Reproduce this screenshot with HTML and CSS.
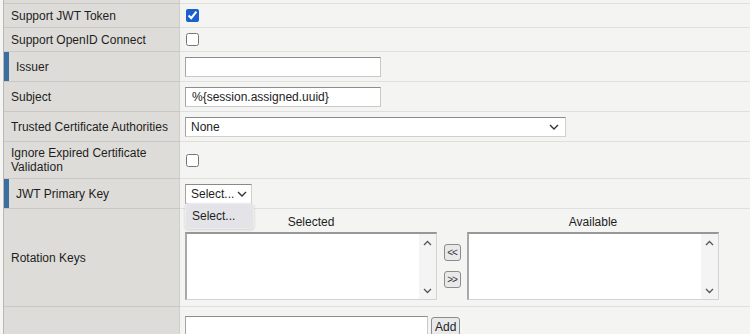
FILE: index.html
```html
<!DOCTYPE html>
<html lang="en">
<head>
    <meta charset="UTF-8">
    <title>JWT Settings</title>
    <link rel="stylesheet" href="styles.css">
</head>
<body>
    <div class="form">
        <div class="row row-top"><div class="label"></div><div class="field"></div></div>

        <div class="row row-short">
            <div class="label">Support JWT Token</div>
            <div class="field"><input type="checkbox" checked></div>
        </div>
        <div class="row row-short">
            <div class="label">Support OpenID Connect</div>
            <div class="field"><input type="checkbox"></div>
        </div>
        <div class="row">
            <div class="label required">Issuer</div>
            <div class="field"><input class="text" type="text"></div>
        </div>
        <div class="row">
            <div class="label">Subject</div>
            <div class="field"><input class="text" type="text" value="%{session.assigned.uuid}"></div>
        </div>
        <div class="row">
            <div class="label">Trusted Certificate Authorities</div>
            <div class="field">
                <div class="select select-wide">
                    <span>None</span>
                    <svg width="10" height="6" viewBox="0 0 10 6"><path d="M1 1 L5 5 L9 1" fill="none" stroke="#333" stroke-width="1.4"/></svg>
                </div>
            </div>
        </div>
        <div class="row row-tall">
            <div class="label">Ignore Expired Certificate Validation</div>
            <div class="field"><input type="checkbox"></div>
        </div>
        <div class="row">
            <div class="label required">JWT Primary Key</div>
            <div class="field">
                <div class="select select-small">
                    <span>Select...</span>
                    <svg width="10" height="6" viewBox="0 0 10 6"><path d="M1 1 L5 5 L9 1" fill="none" stroke="#333" stroke-width="1.4"/></svg>
                    <div class="popup">Select...</div>
                </div>
            </div>
        </div>
        <div class="row row-lists">
            <div class="label">Rotation Keys</div>
            <div class="field">
                <div class="swap">
                    <div class="list-col">
                        <div class="list-title">Selected</div>
                        <div class="listbox">
                            <div class="list-body"></div>
                            <div class="scroll">
                                <svg width="9" height="6" viewBox="0 0 9 6"><path d="M1 5 L4.5 1.5 L8 5" fill="none" stroke="#555" stroke-width="1.3"/></svg>
                                <svg width="9" height="6" viewBox="0 0 9 6"><path d="M1 1 L4.5 4.5 L8 1" fill="none" stroke="#555" stroke-width="1.3"/></svg>
                            </div>
                        </div>
                    </div>
                    <div class="swap-buttons">
                        <button class="mini">&lt;&lt;</button>
                        <button class="mini">&gt;&gt;</button>
                    </div>
                    <div class="list-col">
                        <div class="list-title">Available</div>
                        <div class="listbox">
                            <div class="list-body"></div>
                            <div class="scroll">
                                <svg width="9" height="6" viewBox="0 0 9 6"><path d="M1 5 L4.5 1.5 L8 5" fill="none" stroke="#555" stroke-width="1.3"/></svg>
                                <svg width="9" height="6" viewBox="0 0 9 6"><path d="M1 1 L4.5 4.5 L8 1" fill="none" stroke="#555" stroke-width="1.3"/></svg>
                            </div>
                        </div>
                    </div>
                </div>
            </div>
        </div>
        <div class="row row-last">
            <div class="label"></div>
            <div class="field field-add">
                <input class="text text-add" type="text">
                <button class="add">Add</button>
            </div>
        </div>
    </div>
</body>
</html>
```

FILE: styles.css
```css
body { margin: 0; background: #f4f4f2; font-family: "Liberation Sans", Arial, sans-serif; font-size: 12px; color: #1e1e1e; overflow: hidden; }
.form { margin-left: 3px; border-left: 1px solid #b9b8b4; }
.row { display: flex; height: 29px; border-bottom: 1px solid #c9c8c4; }
.row-top { height: 3px; }
.row-short { height: 23px; }
.row-tall { height: 36px; }
.row-lists { height: 97px; }
.row-last { height: 40px; border-bottom: none; }
.label { width: 176px; flex: none; box-sizing: border-box; padding: 0 6px 0 7px; background: #dddcd8; border-right: 1px solid #cfcecb; display: flex; align-items: center; line-height: 14px; }
.label.required { border-left: 5px solid #3b6d9f; padding-left: 7px; }
.field { flex: 1; padding-left: 5px; display: flex; align-items: center; background: #f4f4f2; box-shadow: 0 1px 0 #dfdfdd; }
input[type=checkbox] { margin: 0 0 0 1px; width: 13px; height: 13px; accent-color: #1b5fcf; }
.text { width: 196px; height: 20px; box-sizing: border-box; border: 1px solid #c9c9c9; border-top-color: #8d8d8d; border-left-color: #a5a5a5; background: #fff; font: 12px "Liberation Sans", Arial, sans-serif; color: #222; padding: 0 6px; }
.select { position: relative; height: 20px; box-sizing: border-box; border: 1px solid #cfcfcf; border-top-color: #8a8a8a; border-left-color: #a3a3a3; background: #fff; display: flex; align-items: center; justify-content: space-between; padding: 0 6px 0 5px; }
.select-wide { width: 381px; }
.select-small { width: 67px; padding-right: 4px; }
.popup { position: absolute; left: -1px; top: 18px; width: 69px; height: 26px; box-sizing: border-box; padding: 5px 0 0 6px; background: #e4e4e8; border: 1px solid #ececef; border-radius: 4px; box-shadow: 0 1px 3px rgba(0,0,0,0.15); z-index: 2; }
.row-lists .field { align-items: flex-start; }
.swap { display: flex; align-items: flex-end; padding-top: 6px; }
.list-col { display: flex; flex-direction: column; align-items: center; }
.list-title { height: 14px; line-height: 14px; margin-bottom: 3px; }
.listbox { width: 252px; height: 68px; box-sizing: border-box; display: flex; background: #fff; border: 1px solid #d3d3d3; border-top: 2px solid #979797; border-left: 2px solid #a9a9a9; }
.list-body { flex: 1; }
.scroll { width: 17px; background: #f4f4f4; display: flex; flex-direction: column; justify-content: space-between; align-items: center; padding: 6px 0 5px; }
.swap-buttons { width: 30px; height: 68px; display: flex; flex-direction: column; align-items: center; justify-content: center; gap: 10px; }
.mini { width: 17px; height: 17px; padding: 0; border: 1px solid #8c8c8c; border-radius: 3px; background: #e9e9eb; font: 10px "Liberation Sans", Arial, sans-serif; color: #333; letter-spacing: -1px; }
.field-add { align-items: flex-start; padding-top: 9px; gap: 3px; }
.text-add { width: 243px; height: 24px; }
.add { height: 19px; margin-top: 1px; padding: 0 3px; border: 1px solid #8c8c8c; border-radius: 3px; background: #e9e9eb; font: 12px "Liberation Sans", Arial, sans-serif; color: #222; }
```
